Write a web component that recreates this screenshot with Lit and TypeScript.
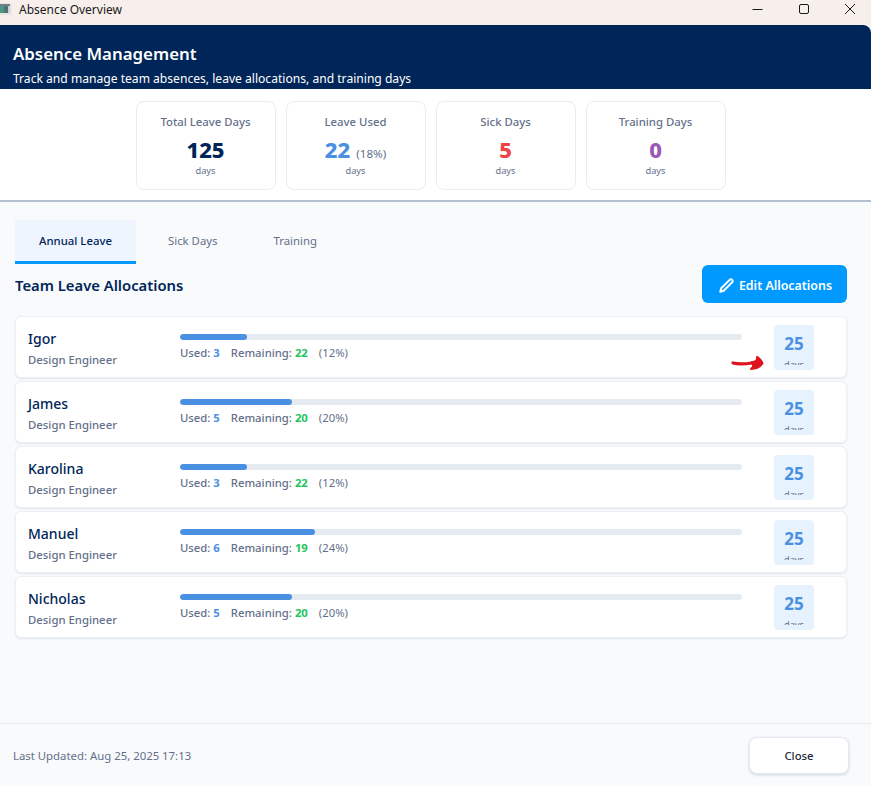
import { LitElement, html, css } from 'lit';
import { customElement } from 'lit/decorators.js';

const stats = [
  { label: 'Total Leave Days', value: '125', cls: 'navy' },
  { label: 'Leave Used', value: '22', cls: 'blue', extra: '(18%)' },
  { label: 'Sick Days', value: '5', cls: 'red' },
  { label: 'Training Days', value: '0', cls: 'purple' },
];

const people = [
  { name: 'Igor', used: 3, left: 22, pct: 12 },
  { name: 'James', used: 5, left: 20, pct: 20 },
  { name: 'Karolina', used: 3, left: 22, pct: 12 },
  { name: 'Manuel', used: 6, left: 19, pct: 24 },
  { name: 'Nicholas', used: 5, left: 20, pct: 20 },
];

@customElement('app-root')
export class AppRoot extends LitElement {
  static styles = css`
    :host {
      display: block;
      height: 786px;
      font-family: 'Noto Sans', 'Open Sans', sans-serif;
      background: #f8fafc;
      overflow: hidden;
      position: relative;
    }
    .window {
      height: 786px;
      display: flex;
      flex-direction: column;
    }
    .titlebar {
      height: 25px;
      flex: none;
      box-sizing: border-box;
      padding-bottom: 7px;
      display: flex;
      align-items: center;
      background: #f6efec;
      color: #1a1a1a;
      font-size: 12px;
    }
    .app-icon {
      width: 12px;
      height: 12px;
      margin-right: 7px;
      flex: none;
    }
    .win-buttons {
      margin-left: auto;
      display: flex;
      padding-right: 15px;
    }
    .win-buttons svg {
      display: block;
      width: 12px;
      height: 12px;
      margin-left: 34px;
    }
    .header {
      height: 64px;
      flex: none;
      box-sizing: border-box;
      padding: 17px 13px 0;
      background: #002558;
      color: #fff;
      border-top-right-radius: 8px;
    }
    .header h1 {
      margin: 0;
      font-size: 16.85px;
      line-height: 24px;
      font-weight: 600;
    }
    .header p {
      margin: 4px 0 0;
      font-size: 12.1px;
      line-height: 18px;
    }
    .stats {
      height: 113px;
      flex: none;
      box-sizing: border-box;
      background: #fff;
      border-bottom: 2px solid #b4bfcf;
      display: flex;
      justify-content: center;
      gap: 10px;
      padding: 12px 10px 0 0;
    }
    .stat {
      width: 140px;
      height: 89px;
      box-sizing: border-box;
      border: 1px solid #e8edf3;
      border-radius: 8px;
      background: #fff;
      text-align: center;
      padding-top: 11px;
    }
    .stat-label {
      font-size: 11.35px;
      line-height: 18px;
      color: #64708a;
      font-weight: 500;
    }
    .stat-value {
      height: 30px;
      font-size: 22px;
      line-height: 30px;
      font-weight: 800;
      margin-top: 3px;
    }
    .stat-extra {
      font-size: 11.6px;
      line-height: 1;
      font-weight: 400;
      color: #64708a;
      margin-left: 6px;
    }
    .stat-unit {
      font-size: 9.3px;
      line-height: 13px;
      color: #64708a;
    }
    .navy { color: #002558; }
    .blue { color: #4a90e2; }
    .red { color: #ef4444; }
    .purple { color: #9b59b6; }
    .content {
      flex: 1;
      padding: 18px 24px 0 15px;
      min-height: 0;
    }
    .tabs {
      display: flex;
    }
    .tab {
      height: 44px;
      box-sizing: border-box;
      padding: 0 28px;
      display: flex;
      align-items: center;
      font-size: 11.35px;
      color: #64708a;
      border-bottom: 3px solid transparent;
    }
    .tab.active {
      width: 121px;
      justify-content: center;
      padding: 0;
      color: #002558;
      font-weight: 500;
      background: #eff5ff;
      border-bottom-color: #0099ff;
      margin-right: 4px;
    }
    .section-head {
      display: flex;
      align-items: center;
      justify-content: space-between;
      margin-top: 1px;
      height: 38px;
    }
    .section-head h2 {
      margin: 2px 0 0;
      font-size: 14.8px;
      font-weight: 600;
      color: #002558;
    }
    .edit {
      width: 145px;
      height: 38px;
      box-sizing: border-box;
      border-radius: 6px;
      background: #0099ff;
      color: #fff;
      font-size: 12.4px;
      font-weight: 600;
      display: flex;
      align-items: center;
      justify-content: center;
      gap: 5px;
      padding: 2px 0 0 2px;
    }
    .edit svg {
      width: 15px;
      height: 15px;
    }
    .rows {
      margin-top: 13px;
      display: flex;
      flex-direction: column;
      gap: 3px;
    }
    .row {
      height: 62px;
      box-sizing: border-box;
      background: #fff;
      border: 1px solid #eceff4;
      border-radius: 6px;
      box-shadow: 0 1px 2px rgba(30, 50, 90, 0.1);
      display: flex;
      align-items: center;
      padding: 0 32px 0 12px;
    }
    .who {
      width: 152px;
      flex: none;
      margin-top: 2px;
    }
    .name {
      font-size: 14px;
      line-height: 20px;
      font-weight: 500;
      color: #002558;
    }
    .role {
      font-size: 11.35px;
      line-height: 16px;
      margin-top: 3px;
      color: #64708a;
      font-weight: 500;
    }
    .progress {
      width: 562px;
      flex: none;
      margin-top: -1px;
    }
    .track {
      height: 6px;
      border-radius: 3px;
      background: #e6ebf2;
      overflow: hidden;
    }
    .fill {
      height: 100%;
      border-radius: 3px;
      background: #4a90e2;
    }
    .nums {
      display: flex;
      font-size: 11.3px;
      line-height: 15px;
      margin-top: 5px;
      color: #64708a;
      font-weight: 500;
      white-space: pre;
    }
    .nums b {
      font-weight: 700;
    }
    .nums .green { color: #22c55e; }
    .nums .gap { margin-left: 11px; }
    .pct { margin-left: 11px; font-weight: 400; }
    .badge {
      width: 40px;
      height: 45px;
      flex: none;
      margin-left: 32px;
      box-sizing: border-box;
      padding: 8px 0 5px;
      background: #e6f2fd;
      border-radius: 4px;
      text-align: center;
    }
    .badge-inner {
      height: 32px;
      overflow: hidden;
    }
    .badge-num {
      font-size: 17px;
      line-height: 21px;
      font-weight: 700;
      color: #4a90e2;
    }
    .badge-unit {
      font-size: 9.3px;
      line-height: 13px;
      margin-top: 4px;
      color: #64708a;
    }
    .footer {
      height: 63px;
      flex: none;
      box-sizing: border-box;
      border-top: 1px solid #e6eaf0;
      display: flex;
      align-items: center;
      justify-content: space-between;
      padding: 0 22px 0 13px;
      font-size: 11.37px;
      color: #64708a;
    }
    .close {
      width: 100px;
      height: 37px;
      box-sizing: border-box;
      margin-top: 1px;
      border: 1px solid #e6eaf0;
      border-radius: 8px;
      background: #fff;
      box-shadow: 0 1px 3px rgba(30, 50, 90, 0.18);
      display: flex;
      align-items: center;
      justify-content: center;
      color: #1f2a3d;
      font-size: 11.35px;
      font-weight: 500;
    }
    .scribble {
      position: absolute;
      left: 730px;
      top: 354px;
      width: 36px;
      height: 18px;
    }
  `;

  render() {
    return html`
      <div class="window">
        <div class="titlebar">
          <svg class="app-icon" viewBox="0 0 12 12">
            <rect width="12" height="12" fill="#e9e6e2" />
            <rect x="0" y="1" width="10" height="2" fill="#6f7f86" />
            <rect x="0" y="3" width="4" height="7" fill="#4f9583" />
            <rect x="4" y="3" width="4" height="7" fill="#55707c" />
            <rect x="8" y="3" width="2" height="7" fill="#c9d3d2" />
          </svg>
          <span>Absence Overview</span>
          <div class="win-buttons">
            <svg viewBox="0 0 12 12" fill="none" stroke="#1a1a1a" stroke-width="1">
              <path d="M0.5 6.5H10.5" />
            </svg>
            <svg viewBox="0 0 12 12" fill="none" stroke="#1a1a1a" stroke-width="1">
              <rect x="1.5" y="1.5" width="9" height="9" rx="1.5" />
            </svg>
            <svg viewBox="0 0 12 12" fill="none" stroke="#1a1a1a" stroke-width="1">
              <path d="M1 1L11 11M11 1L1 11" />
            </svg>
          </div>
        </div>
        <div class="header">
          <h1>Absence Management</h1>
          <p>Track and manage team absences, leave allocations, and training days</p>
        </div>
        <div class="stats">
          ${stats.map(
            (s) => html`
              <div class="stat">
                <div class="stat-label">${s.label}</div>
                <div class="stat-value ${s.cls}">
                  ${s.value}${s.extra ? html`<span class="stat-extra">${s.extra}</span>` : ''}
                </div>
                <div class="stat-unit">days</div>
              </div>
            `
          )}
        </div>
        <div class="content">
          <div class="tabs">
            <div class="tab active">Annual Leave</div>
            <div class="tab">Sick Days</div>
            <div class="tab">Training</div>
          </div>
          <div class="section-head">
            <h2>Team Leave Allocations</h2>
            <div class="edit">
              <svg viewBox="0 0 24 24" fill="none" stroke="#fff" stroke-width="3.2" stroke-linecap="round" stroke-linejoin="round">
                <path d="M17 3a2.83 2.83 0 1 1 4 4L7.5 20.5 2 22l1.5-5.5L17 3z" />
              </svg>
              Edit Allocations
            </div>
          </div>
          <div class="rows">
            ${people.map(
              (p) => html`
                <div class="row">
                  <div class="who">
                    <div class="name">${p.name}</div>
                    <div class="role">Design Engineer</div>
                  </div>
                  <div class="progress">
                    <div class="track"><div class="fill" style="width:${p.pct}%"></div></div>
                    <div class="nums">
                      <span>Used: <b class="blue">${p.used}</b></span>
                      <span class="gap">Remaining: <b class="green">${p.left}</b></span>
                      <span class="pct">(${p.pct}%)</span>
                    </div>
                  </div>
                  <div class="badge">
                    <div class="badge-inner">
                      <div class="badge-num">25</div>
                      <div class="badge-unit">days</div>
                    </div>
                  </div>
                </div>
              `
            )}
          </div>
        </div>
        <div class="footer">
          <span>Last Updated: Aug 25, 2025 17:13</span>
          <div class="close">Close</div>
        </div>
      </div>
      <svg class="scribble" viewBox="0 0 36 18" fill="none" stroke="#e0141c" stroke-linecap="round" stroke-linejoin="round">
        <path d="M3 9C9 10.5 15 10 22 9" stroke-width="3.2" />
        <path d="M21 8.5C25 8 28 6 27 3C29 4 32 7 32.5 9.5C30 13 26 15 21 15C24 12.5 24 10.5 21 8.5Z" fill="#e0141c" stroke-width="2" />
      </svg>
    `;
  }
}
